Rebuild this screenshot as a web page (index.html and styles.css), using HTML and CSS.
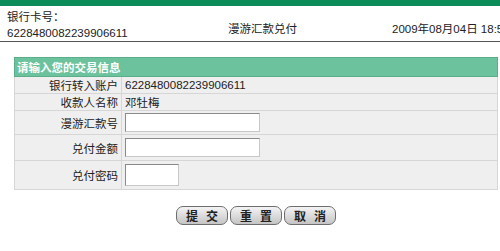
FILE: index.html
```html
<!DOCTYPE html>
<html lang="zh-CN">
<head>
  <meta charset="UTF-8" />
  <title>漫游汇款兑付</title>
  <link rel="stylesheet" href="styles.css">
</head>
<body>
  <div class="topbar"></div>

  <div class="header">
    <div class="card">银行卡号：<br>6228480082239906611</div>
    <div class="title">漫游汇款兑付</div>
    <div class="date">2009年08月04日 18:52</div>
  </div>

  <table class="form-table">
    <tr class="caption">
      <td colspan="2">请输入您的交易信息</td>
    </tr>
    <tr class="row-s">
      <th>银行转入账户</th>
      <td>6228480082239906611</td>
    </tr>
    <tr class="row-s">
      <th>收款人名称</th>
      <td>邓牡梅</td>
    </tr>
    <tr class="row-a">
      <th>漫游汇款号</th>
      <td><input type="text" class="field-long"></td>
    </tr>
    <tr class="row-b">
      <th>兑付金额</th>
      <td><input type="text" class="field-long"></td>
    </tr>
    <tr class="row-c">
      <th>兑付密码</th>
      <td><input type="password" class="field-short"></td>
    </tr>
  </table>

  <div class="actions">
    <button>提交</button>
    <button>重置</button>
    <button>取消</button>
  </div>
</body>
</html>
```

FILE: styles.css
```css
body {
  margin: 0;
  font-family: "Liberation Sans", "Noto Sans CJK SC", sans-serif;
  font-size: 11.5px;
  color: #222;
  background-color: #fff;
  overflow: hidden;
}
.topbar {
  height: 6px;
  background-color: #0b8c58;
}
.header {
  display: flex;
  align-items: center;
  height: 35px;
  border-bottom: 1px solid #555;
  white-space: nowrap;
  line-height: 16px;
}
.header > div {
  flex-shrink: 0;
}
.card {
  width: 221px;
  padding-left: 7px;
  padding-top: 2px;
}
.title {
  width: 164px;
  padding-top: 10px;
}
.date {
  padding-top: 10px;
}
.form-table {
  margin: 15px 0 0 14px;
  width: 484px;
  border-collapse: collapse;
  border: 1px solid #d3d3d3;
}
.form-table th,
.form-table td {
  border: 1px solid #d6d6d6;
  background-color: #efefef;
  padding: 0 3px;
}
.form-table th {
  width: 100px;
  text-align: right;
  font-weight: normal;
}
.caption td {
  height: 18px;
  background-color: #6bc29d;
  border-color: #5aae8a;
  color: #fff;
  font-weight: bold;
  padding-left: 2px;
}
.row-s th, .row-s td { height: 16px; }
.row-a th, .row-a td { height: 23px; }
.row-b th, .row-b td { height: 25px; }
.row-c th, .row-c td { height: 28px; }
input {
  box-sizing: border-box;
  margin: 0;
  border: 1px solid #8a8a8a;
  border-right-color: #c8c8c8;
  border-bottom-color: #c8c8c8;
  background-color: #fff;
  vertical-align: middle;
}
.field-long {
  width: 135px;
  height: 19px;
}
.field-short {
  width: 54px;
  height: 22px;
}
.actions {
  width: 484px;
  margin: 16px 0 0 14px;
  display: flex;
  justify-content: center;
  gap: 2px;
}
button {
  width: 52px;
  height: 19px;
  padding: 0 0 0 8px;
  font-family: "Noto Sans CJK SC", sans-serif;
  font-size: 12px;
  font-weight: bold;
  letter-spacing: 8px;
  line-height: 15px;
  color: #222;
  border: 1px solid #6e6e6e;
  border-radius: 7px;
  background: linear-gradient(#f4f4f4, #c4c4c4);
  cursor: pointer;
}
```
